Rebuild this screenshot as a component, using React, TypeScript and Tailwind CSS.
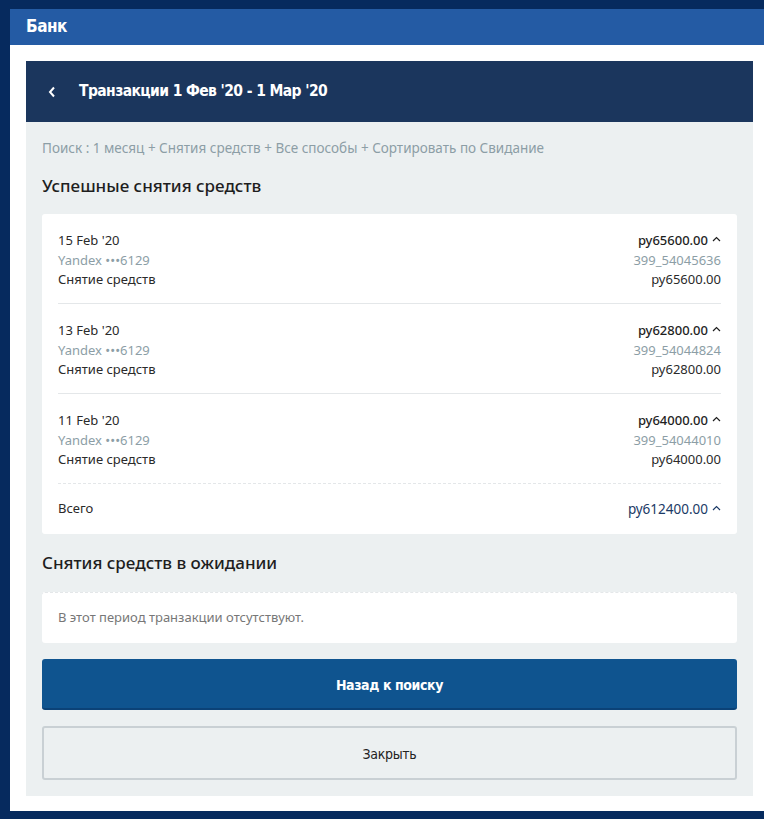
import React from 'react'

type Tx = {
  date: string
  card: string
  amount: string
  ref: string
}

const rows: Tx[] = [
  { date: "15 Feb '20", card: 'Yandex •••6129', amount: 'ру65600.00', ref: '399_54045636' },
  { date: "13 Feb '20", card: 'Yandex •••6129', amount: 'ру62800.00', ref: '399_54044824' },
  { date: "11 Feb '20", card: 'Yandex •••6129', amount: 'ру64000.00', ref: '399_54044010' },
]

const body = { fontFamily: '"Noto Sans", "Open Sans", sans-serif' }
const narrow = { fontFamily: '"DejaVu Sans Condensed", "Roboto", sans-serif' }

function Caret() {
  return (
    <svg width="9" height="6" viewBox="0 0 9 6" className="ml-[4px] inline-block mb-[5px]">
      <path d="M1 5 L4.5 1.5 L8 5" stroke="currentColor" strokeWidth="1.2" fill="none" />
    </svg>
  )
}

export default function App() {
  return (
    <div className="h-[819px] w-[764px] overflow-hidden bg-[#062a5e] pt-[9px] pl-[10px]" style={body}>
      <div className="w-[759px] bg-white pb-[15px]">
        {/* window title */}
        <div className="h-[36px] bg-[#245ba4] pl-[16px] flex items-center">
          <span className="text-white text-[17px] font-bold tracking-[-0.5px]" style={narrow}>Банк</span>
        </div>

        <div className="pt-[16px] pl-[16px] pr-[16px]">
          {/* panel header */}
          <div className="h-[61px] bg-[#1b365d] flex items-center pl-[22px]">
            <svg width="8" height="12" viewBox="0 0 8 12" className="mr-[23px] text-white">
              <path d="M6 1.5 L2 6 L6 10.5" stroke="currentColor" strokeWidth="2" fill="none" />
            </svg>
            <span className="text-white text-[15.5px] font-bold tracking-[-0.6px]" style={narrow}>
              Транзакции 1 Фев '20 - 1 Мар '20
            </span>
          </div>

          <div className="bg-[#ecf0f1] px-[16px] pt-[17px] pb-[16px]">
            <div className="text-[13.5px] leading-[18px] text-[#8c9ea6]">
              Поиск : 1 месяц + Снятия средств + Все способы + Сортировать по Свидание
            </div>
            <h2 className="mt-[17px] text-[17px] leading-[24px] font-medium text-[#1e1e1e]">
              Успешные снятия средств
            </h2>

            <div className="mt-[16px] bg-white rounded-[3px] px-[16px]">
              {rows.map((r, i) => (
                <div
                  key={i}
                  className={`flex justify-between pt-[17px] pb-[13.5px] text-[13px] leading-[19.5px] ${i < rows.length - 1 ? 'border-b border-[#e4e7e9]' : 'border-b border-dashed border-[#e4e7e9]'}`}
                >
                  <div>
                    <div className="text-[#2a2a2a]">{r.date}</div>
                    <div className="text-[#8c9ea6]">{r.card}</div>
                    <div className="text-[#2a2a2a]">Снятие средств</div>
                  </div>
                  <div className="text-right">
                    <div className="text-[#1e1e1e] font-medium">
                      {r.amount}
                      <Caret />
                    </div>
                    <div className="text-[#8c9ea6]">{r.ref}</div>
                    <div className="text-[#2a2a2a]">{r.amount}</div>
                  </div>
                </div>
              ))}
              <div className="h-[50px] flex items-center justify-between text-[13px]">
                <span className="text-[#2a2a2a]">Всего</span>
                <span className="text-[#1b3a66] text-[13.5px]">
                  ру612400.00
                  <Caret />
                </span>
              </div>
            </div>

            <h2 className="mt-[17px] text-[17px] leading-[24px] font-medium text-[#1e1e1e]">
              Снятия средств в ожидании
            </h2>
            <div className="mt-[17px] bg-white rounded-[3px] border-t border-dashed border-[#e4e7e9] h-[51px] flex items-center px-[16px] text-[13px] text-[#777]">
              В этот период транзакции отсутствуют.
            </div>

            <button
              className="mt-[16px] w-full h-[51px] pt-[3px] rounded-[3px] bg-[#0f548f] border-b-2 border-[#0b4277] text-white text-[14px] font-bold tracking-[-0.4px]"
              style={narrow}
            >
              Назад к поиску
            </button>
            <button
              className="mt-[16px] w-full h-[54px] pt-[3px] rounded-[3px] bg-[#ecf0f1] border-2 border-[#c9d0d4] text-[#222] text-[14px] tracking-[-0.3px]"
              style={narrow}
            >
              Закрыть
            </button>
          </div>
        </div>
      </div>
    </div>
  )
}
